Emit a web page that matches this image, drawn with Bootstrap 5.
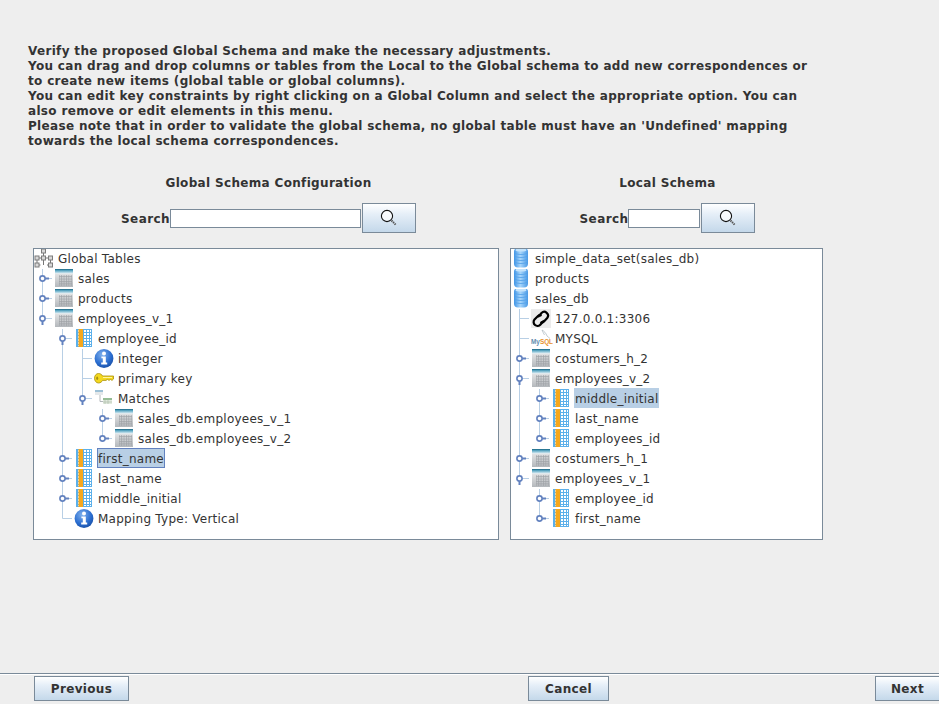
<!DOCTYPE html>
<html>
<head>
    <title>Global Schema Configuration</title>
    <meta charset="UTF-8">
    <meta name="viewport" content="width=device-width, initial-scale=1">
    <link href="https://cdn.jsdelivr.net/npm/bootstrap@5.3.0/dist/css/bootstrap.min.css" rel="stylesheet">
    <style>
        html, body { height: 704px; overflow: hidden; }
        body { background: #eeeeee; color: #333333; font-family: "DejaVu Sans", sans-serif; font-size: 12px; letter-spacing: .33px; }
        .intro { padding: 44px 0 0 28px; font-weight: 700; line-height: 15px; }
        .intro-line { white-space: nowrap; }
        .panes { padding-left: 33px; gap: 11px; margin-top: 24px; }
        .pane-left { width: 466px; }
        .pane-right { width: 313px; }
        .head-left { padding-left: 5px; }
        .head-right { padding-left: 2px; }
        .pane-title { font-weight: 700; line-height: 20px; text-align: center; }
        .search-row { margin-top: 10px; height: 30px; }
        .search-label { padding-top: 2px; font-weight: 700; letter-spacing: .4px; }
        .search-input { height: 19px; border: 1px solid #7a8a99; background: #fff; border-radius: 0; padding: 0 2px; margin: 0 1px 0 0; }
        .input-wide { width: 191px; }
        .input-narrow { width: 72px; }
        .metal-btn { display: inline-flex; align-items: center; justify-content: center; padding: 0; border: 1px solid #7a8a99; border-radius: 0; color: #333333; font-size: 12px; font-weight: 700; letter-spacing: .33px; background: linear-gradient(#ffffff, #e6eff8 35%, #c4d8ea); }
        .search-btn { width: 54px; height: 30px; }
        .tree-box { margin-top: 15px; height: 292px; border: 1px solid #7a8a99; background: #fff; overflow: hidden; }
        .tree-row { display: flex; height: 20px; white-space: nowrap; }
        .tree-cell { flex: 0 0 20px; width: 20px; height: 20px; overflow: visible; display: block; }
        .tree-label { margin: -1px 0 0 3px; padding: 0 1px; height: 20px; line-height: 23px; letter-spacing: .25px; }
        .label-on { background: #b8cfe5; }
        .label-focus { box-shadow: inset 0 0 0 1px #6382bf; }
        .mysql-word { font-family: "Liberation Sans", sans-serif; font-size: 6.4px; font-weight: 700; letter-spacing: 0; fill: #5f8cae; }
        .mysql-sql { fill: #e8912c; }
        .foot { margin-top: auto; height: 31px; border-top: 1px solid #7a8a99; box-shadow: inset 0 1px 0 #fff; padding: 2px 0 0 34px; overflow: hidden; }
        .foot-btn { height: 25px; flex: none; }
        .btn-prev { width: 95px; }
        .btn-cancel { width: 81px; margin-left: 399px; }
        .btn-next { width: 65px; margin-left: 266px; }
        .sprite { display: block; width: 0; height: 0; }
    </style>
</head>
<body class="d-flex flex-column">

<!-- shared icons -->
<svg class="sprite" aria-hidden="true">
    <defs>
        <linearGradient id="gHead" x1="0" y1="0" x2="0" y2="1"><stop offset="0" stop-color="#14617f"/><stop offset=".35" stop-color="#5aa6c2"/><stop offset="1" stop-color="#dff0f6"/></linearGradient>
        <linearGradient id="gBody" x1="0" y1="0" x2="0" y2="1"><stop offset="0" stop-color="#f2f2f2"/><stop offset="1" stop-color="#b4b8bc"/></linearGradient>
        <radialGradient id="gInfo" cx=".4" cy=".3" r=".8"><stop offset="0" stop-color="#7fb0ec"/><stop offset=".6" stop-color="#2a6dd0"/><stop offset="1" stop-color="#174a9c"/></radialGradient>
        <linearGradient id="gDisc" x1="0" y1="0" x2="1" y2="0"><stop offset="0" stop-color="#3f94e6"/><stop offset=".45" stop-color="#a8d6fb"/><stop offset="1" stop-color="#4a9ae6"/></linearGradient>
        <pattern id="pGrid" width="2.4" height="2.4" patternUnits="userSpaceOnUse"><path d="M0 .5H2.4M.5 0V2.4" stroke="#9ea2a6" stroke-width=".7" fill="none"/></pattern>
        <pattern id="pCol" width="3" height="3" patternUnits="userSpaceOnUse"><path d="M0 .5H3M.5 0V3" stroke="#5cb0ea" stroke-width="1" fill="none"/></pattern>
    </defs>

    <symbol id="guide" viewBox="0 0 20 20"><path d="M8.5 0V20" stroke="#b8cfe5"/></symbol>
    <symbol id="tee" viewBox="0 0 20 20"><path d="M8.5 0V20M8.5 9.5H18" stroke="#b8cfe5"/></symbol>
    <symbol id="ell" viewBox="0 0 20 20"><path d="M8.5 0V9.5H18" stroke="#b8cfe5" fill="none"/></symbol>
    <symbol id="shut" viewBox="0 0 20 20"><path d="M11 9.5H15" stroke="#6382bf" stroke-width="2"/><circle cx="8.5" cy="9.5" r="2.6" fill="#fff" stroke="#6382bf" stroke-width="1.6"/></symbol>
    <symbol id="open" viewBox="0 0 20 20"><path d="M8.5 12V16" stroke="#6382bf" stroke-width="2"/><circle cx="8.5" cy="9.5" r="2.6" fill="#fff" stroke="#6382bf" stroke-width="1.6"/></symbol>

    <symbol id="i-table" viewBox="0 0 20 20">
        <rect x="1" y="0" width="18" height="18" fill="url(#gBody)"/>
        <rect x="1" y="0" width="18" height="4.5" fill="url(#gHead)"/>
        <rect x="5" y="6" width="13" height="11" fill="url(#pGrid)"/>
    </symbol>
    <symbol id="i-col" viewBox="0 0 20 20">
        <rect x="2" y="0" width="16" height="18" fill="#fff"/>
        <rect x="2" y="0" width="16" height="18" fill="url(#pCol)"/>
        <path d="M2.5 0V18M17.5 0V18M2 .5H18M2 17.5H18" stroke="#5cb0ea" fill="none"/>
        <rect x="4.5" y="0" width="4.5" height="18" fill="#f6a81c"/>
    </symbol>
    <symbol id="i-info" viewBox="0 0 20 20">
        <circle cx="10" cy="9.5" r="9.4" fill="url(#gInfo)"/>
        <circle cx="10" cy="4.6" r="2" fill="#fff"/>
        <path d="M7.4 7.4H11.8V13.6H13.2V15.4H7.2V13.6H8.8V9.2H7.4Z" fill="#fff"/>
    </symbol>
    <symbol id="i-key" viewBox="0 0 20 20">
        <path d="M4.5 4.5C6.4 4.5 7.9 5.6 8.6 7H19.5V10L18 11.4L16.6 10.4L15 11.4L13.5 10.4L12 11.4H8.6C7.9 12.8 6.4 14 4.5 14C2.2 14 .5 11.8 .5 9.2S2.2 4.5 4.5 4.5Z" fill="#f4d81e" stroke="#a89010" stroke-width=".8"/>
        <ellipse cx="3.2" cy="9.2" rx="1" ry="1.7" fill="#a89010"/>
        <path d="M9 8.5H18" stroke="#fff5a0"/>
    </symbol>
    <symbol id="i-match" viewBox="0 0 20 20">
        <path d="M6 6V12.5H9" stroke="#b4b8bc" fill="none"/>
        <rect x="1" y="1" width="8" height="5" fill="#e4e8ea"/>
        <rect x="1" y="1" width="8" height="2" fill="#9cc0d6"/>
        <rect x="9" y="9" width="9" height="6" fill="#e2eadf"/>
        <rect x="9" y="9" width="9" height="2" fill="#94bc94"/>
        <path d="M11 11V15M14 11V15M9 13H18" stroke="#a8b8a4" stroke-width=".6"/>
    </symbol>
    <symbol id="i-db" viewBox="0 0 20 20">
        <rect x="3" y="-1" width="14" height="19.5" rx="4" fill="url(#gDisc)"/>
        <path d="M3.5 4C6 6 14 6 16.5 4M3.5 10C6 12 14 12 16.5 10M3.5 7C6 9 14 9 16.5 7M3.5 13C6 15 14 15 16.5 13" stroke="#4f9fe8" stroke-width=".8" fill="none"/>
        <ellipse cx="10" cy="1" rx="5.5" ry="1.5" fill="#c4e3fb"/>
    </symbol>
    <symbol id="i-link" viewBox="0 0 20 20">
        <rect x="0" y="-1" width="20" height="20" fill="#ececec"/>
        <g stroke="#000" stroke-width="2.2" fill="none">
            <path d="M7 8L10.5 4A3.8 3.8 0 0 1 16.2 9L13 12.5A2.8 2.8 0 0 1 9.5 12.8"/>
            <path d="M13 11.5L9.5 15.5A3.8 3.8 0 0 1 3.5 10.5L7 7A2.8 2.8 0 0 1 10.5 6.8"/>
        </g>
    </symbol>
    <symbol id="i-global" viewBox="0 0 20 20">
        <path d="M9.5 2V16M3 9H16.5M3 9V16M16.5 9V16H13M3 16H6.5" stroke="#777" fill="none"/>
        <g fill="#d8d8d8" stroke="#7c7c7c"><rect x="7.5" y="0" width="4" height="4"/><rect x="1" y="7" width="4" height="4"/><rect x="7.5" y="7" width="4" height="4"/><rect x="14.5" y="7" width="4" height="4"/><rect x="1" y="14" width="4" height="4"/><rect x="14.5" y="14" width="4" height="4"/></g>
    </symbol>
    <symbol id="i-search" viewBox="0 0 18 18">
        <circle cx="7" cy="7" r="5.6" fill="#fff" fill-opacity=".7" stroke="#111" stroke-width="1.1"/>
        <path d="M11.5 11.5L16 16" stroke="#555" stroke-width="2" stroke-dasharray="1.4 .8"/>
    </symbol>
</svg>

<div class="intro">
    <div class="intro-line">Verify the proposed Global Schema and make the necessary adjustments.</div>
    <div class="intro-line">You can drag and drop columns or tables from the Local to the Global schema to add new correspondences or</div>
    <div class="intro-line">to create new items (global table or global columns).</div>
    <div class="intro-line">You can edit key constraints by right clicking on a Global Column and select the appropriate option. You can</div>
    <div class="intro-line">also remove or edit elements in this menu.</div>
    <div class="intro-line">Please note that in order to validate the global schema, no global table must have an 'Undefined' mapping</div>
    <div class="intro-line">towards the local schema correspondences.</div>
</div>

<div class="panes d-flex">
    <div class="pane-left">
        <div class="head-left">
            <div class="pane-title">Global Schema Configuration</div>
            <div class="search-row d-flex justify-content-center align-items-center">
                <label class="search-label" for="globalSearch">Search</label>
                <input class="search-input input-wide" id="globalSearch" type="text">
                <button class="metal-btn search-btn" type="button"><svg width="18" height="18"><use href="#i-search"/></svg></button>
            </div>
        </div>
        <div class="tree-box" id="globalTree"></div>
    </div>
    <div class="pane-right">
        <div class="head-right">
            <div class="pane-title">Local Schema</div>
            <div class="search-row d-flex justify-content-center align-items-center">
                <label class="search-label" for="localSearch">Search</label>
                <input class="search-input input-narrow" id="localSearch" type="text">
                <button class="metal-btn search-btn" type="button"><svg width="18" height="18"><use href="#i-search"/></svg></button>
            </div>
        </div>
        <div class="tree-box" id="localTree"></div>
    </div>
</div>

<div class="foot d-flex">
    <button class="metal-btn foot-btn btn-prev" type="button">Previous</button>
    <button class="metal-btn foot-btn btn-cancel" type="button">Cancel</button>
    <button class="metal-btn foot-btn btn-next" type="button">Next</button>
</div>

<script>
    // prefix chars: space = empty, g = guide, t/l = tee/corner, c/e = tee with shut/open handle, C/E = corner with shut/open handle
    const CONNECTORS = {
      " ": [],
      g: ["guide"],
      t: ["tee"],
      l: ["ell"],
      c: ["tee", "shut"],
      e: ["tee", "open"],
      C: ["ell", "shut"],
      E: ["ell", "open"]
    };

    // the logo holds live text, so it sits in its row and not in the sprite
    const MYSQL_ICON = `<svg class="tree-cell" viewBox="0 0 20 20">
      <path d="M11 1C13 2 15 4 16 7C17 8 18 8.5 19 9.5M11 1C12 3 12.5 4.5 13.5 6" stroke="#a8b4bc" stroke-width=".7" fill="none"/>
      <text class="mysql-word" x="0" y="15">My<tspan class="mysql-sql">SQL</tspan></text>
    </svg>`;

    const globalRows = [
      ["", "global", "Global Tables"],
      ["c", "table", "sales"],
      ["c", "table", "products"],
      ["E", "table", "employees_v_1"],
      [" e", "col", "employee_id"],
      [" gt", "info", "integer"],
      [" gt", "key", "primary key"],
      [" gE", "match", "Matches"],
      [" g c", "table", "sales_db.employees_v_1"],
      [" g C", "table", "sales_db.employees_v_2"],
      [" c", "col", "first_name", "label-on label-focus"],
      [" c", "col", "last_name"],
      [" c", "col", "middle_initial"],
      [" l", "info", "Mapping Type: Vertical"]
    ];

    const localRows = [
      ["", "db", "simple_data_set(sales_db)"],
      ["", "db", "products"],
      ["", "db", "sales_db"],
      ["t", "link", "127.0.0.1:3306"],
      ["t", "mysql", "MYSQL"],
      ["c", "table", "costumers_h_2"],
      ["e", "table", "employees_v_2"],
      ["gc", "col", "middle_initial", "label-on"],
      ["gc", "col", "last_name"],
      ["gC", "col", "employees_id"],
      ["c", "table", "costumers_h_1"],
      ["E", "table", "employees_v_1"],
      [" c", "col", "employee_id"],
      [" C", "col", "first_name"]
    ];

    function renderTree(target, rows) {
      target.innerHTML = rows.map(([prefix, icon, label, cls]) => {
        const cells = [...prefix].map(ch =>
          `<svg class="tree-cell">${CONNECTORS[ch].map(s => `<use href="#${s}" width="20" height="20"/>`).join("")}</svg>`
        ).join("");
        const iconCell = icon === "mysql" ? MYSQL_ICON : `<svg class="tree-cell"><use href="#i-${icon}" width="20" height="20"/></svg>`;
        return `<div class="tree-row">${cells}${iconCell}<span class="tree-label ${cls || ""}">${label}</span></div>`;
      }).join("");
    }

    renderTree(document.getElementById("globalTree"), globalRows);
    renderTree(document.getElementById("localTree"), localRows);
</script>
<script src="https://cdn.jsdelivr.net/npm/bootstrap@5.3.0/dist/js/bootstrap.bundle.min.js"></script>
</body>
</html>
